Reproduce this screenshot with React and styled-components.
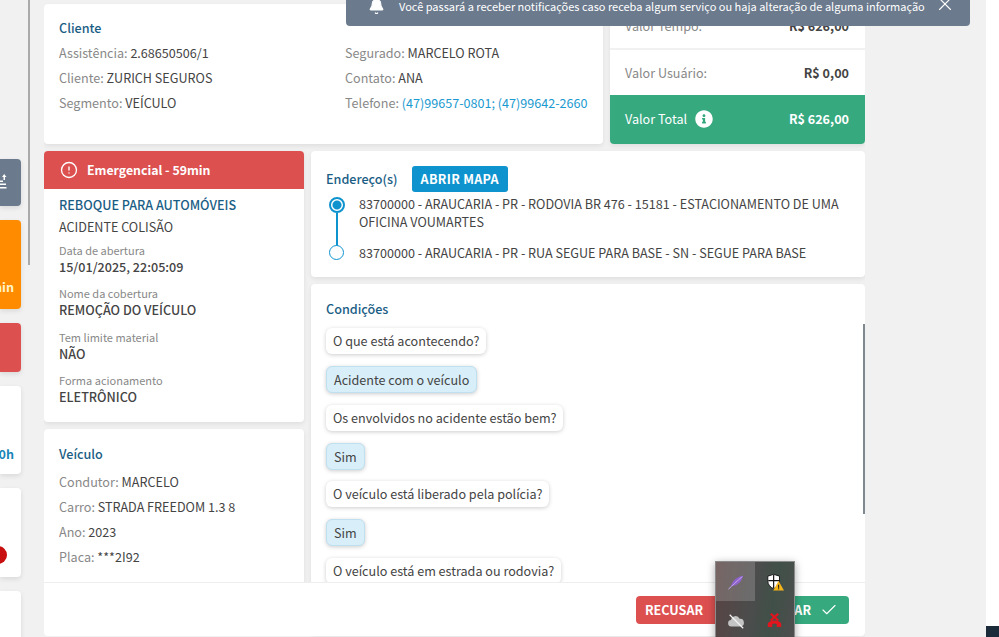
import React from "react";
import styled, { createGlobalStyle } from "styled-components";
import { Bell, Check, CircleAlert, X } from "lucide-react";
import { FaInfoCircle } from "react-icons/fa";

const GlobalStyle = createGlobalStyle`
  html, body {
    margin: 0;
    padding: 0;
    background: #f1f1f1;
  }
  *, *::before, *::after {
    box-sizing: border-box;
  }
`;

const clientLeft = [
  { label: "Assistência", value: "2.68650506/1" },
  { label: "Cliente", value: "ZURICH SEGUROS" },
  { label: "Segmento", value: "VEÍCULO" },
];

const clientRight = [
  { label: "Segurado", value: "MARCELO ROTA" },
  { label: "Contato", value: "ANA" },
  { label: "Telefone", value: "(47)99657-0801; (47)99642-2660", link: true },
];

const fields = [
  { label: "Data de abertura", value: "15/01/2025, 22:05:09" },
  { label: "Nome da cobertura", value: "REMOÇÃO DO VEÍCULO" },
  { label: "Tem limite material", value: "NÃO" },
  { label: "Forma acionamento", value: "ELETRÔNICO" },
];

const vehicle = [
  { label: "Condutor", value: "MARCELO" },
  { label: "Carro", value: "STRADA FREEDOM 1.3 8" },
  { label: "Ano", value: "2023" },
  { label: "Placa", value: "***2I92" },
];

const conditions = [
  { text: "O que está acontecendo?" },
  { text: "Acidente com o veículo", answer: true },
  { text: "Os envolvidos no acidente estão bem?" },
  { text: "Sim", answer: true },
  { text: "O veículo está liberado pela polícia?" },
  { text: "Sim", answer: true },
  { text: "O veículo está em estrada ou rodovia?" },
  { text: "Sim", answer: true },
];

const App = () => {
  return (
    <StPage>
      <GlobalStyle />
      <StSidebar>
        <StQueue>
          <StQueueCard $height={47} $bg="#6b7a8d" $bottom={17}>
            <svg width="7" height="15" viewBox="0 0 7 15" fill="#fff">
              <path d="M4.200 0 6.500 3H5v3H3.500V3H2z" />
              <rect x="0" y="6.500" width="3" height="1.500" />
              <rect x="0" y="9.500" width="6" height="1.500" />
              <rect x="0" y="13" width="6.500" height="1.500" />
            </svg>
          </StQueueCard>
          <StQueueCard $height={89} $bg="#ff8c00" $bottom={13}>
            <StQueueTime $color="#fff5cc">59min</StQueueTime>
          </StQueueCard>
          <StQueueCard $height={49} $bg="#dd5050" />
          <StQueueCard $height={88} $bg="#fff" $bottom={11}>
            <StQueueTime $color="#1b86b8">20h</StQueueTime>
          </StQueueCard>
          <StQueueCard $height={89} $bg="#fff" $bottom={13} $right={14}>
            <StQueueDot />
          </StQueueCard>
          <StQueueCard $height={60} $bg="#fff" />
        </StQueue>
        <StSideThumb />
      </StSidebar>

      <StMain>
        <StTopRow>
          <StClientCard>
            <StCardTitle>Cliente</StCardTitle>
            <StClientGrid>
              <div>
                {clientLeft.map((el) => (
                  <StInfoLine key={el.label}>
                    {el.label}: <StInfoValue>{el.value}</StInfoValue>
                  </StInfoLine>
                ))}
              </div>
              <div>
                {clientRight.map((el) => (
                  <StInfoLine key={el.label}>
                    {el.label}: <StInfoValue $link={el.link}>{el.value}</StInfoValue>
                  </StInfoLine>
                ))}
              </div>
            </StClientGrid>
          </StClientCard>

          <StValueCard>
            <StValueRow $height={46} $divider>
              <span>Valor Tempo:</span>
              <b>R$ 626,00</b>
            </StValueRow>
            <StValueRow $height={45}>
              <span>Valor Usuário:</span>
              <b>R$ 0,00</b>
            </StValueRow>
            <StTotalRow>
              <StTotalLabel>
                Valor Total <FaInfoCircle size={18} />
              </StTotalLabel>
              <b>R$ 626,00</b>
            </StTotalRow>
          </StValueCard>
        </StTopRow>

        <StBottomRow>
          <StLeftColumn>
            <StServiceCard>
              <StServiceHeader>
                <CircleAlert size={18} strokeWidth={1.8} />
                Emergencial - 59min
              </StServiceHeader>
              <StServiceBody>
                <StServiceName>REBOQUE PARA AUTOMÓVEIS</StServiceName>
                <StServiceReason>ACIDENTE COLISÃO</StServiceReason>
                {fields.map((el) => (
                  <StField key={el.label}>
                    <small>{el.label}</small>
                    <strong>{el.value}</strong>
                  </StField>
                ))}
              </StServiceBody>
            </StServiceCard>

            <StVehicleCard>
              <StCardTitle>Veículo</StCardTitle>
              <StVehicleList>
                {vehicle.map((el) => (
                  <StInfoLine key={el.label}>
                    {el.label}: <StInfoValue>{el.value}</StInfoValue>
                  </StInfoLine>
                ))}
              </StVehicleList>
            </StVehicleCard>
          </StLeftColumn>

          <StRightColumn>
            <StAddressCard>
              <StAddressHead>
                <StAddressTitle>Endereço(s)</StAddressTitle>
                <StMapButton>ABRIR MAPA</StMapButton>
              </StAddressHead>
              <StStops>
                <StStop>
                  <StStopMarker $active />
                  <StStopText>
                    83700000 - ARAUCARIA - PR - RODOVIA BR 476 - 15181 - ESTACIONAMENTO DE UMA
                    OFICINA VOUMARTES
                  </StStopText>
                </StStop>
                <StStop>
                  <StStopMarker />
                  <StStopText>
                    83700000 - ARAUCARIA - PR - RUA SEGUE PARA BASE - SN - SEGUE PARA BASE
                  </StStopText>
                </StStop>
              </StStops>
            </StAddressCard>

            <StConditionsCard>
              <StConditionsTitle>Condições</StConditionsTitle>
              <StBubbles>
                {conditions.map((el, i) => (
                  <StBubble key={`condition${i}`} $answer={el.answer}>
                    {el.text}
                  </StBubble>
                ))}
              </StBubbles>
              <StCardThumb />
            </StConditionsCard>
          </StRightColumn>
        </StBottomRow>

        <StFooter>
          <StActionButton $bg="#dd5050" $width={108}>
            RECUSAR
          </StActionButton>
          <StActionButton $bg="#36a97f">
            ACEITAR <Check size={18} strokeWidth={1.5} />
          </StActionButton>
        </StFooter>
      </StMain>

      <StBackdrop />
      <StEdge>
        <StEdgeCorner />
      </StEdge>

      <StToast>
        <Bell size={17} fill="#fff" strokeWidth={1.5} />
        <StToastText>
          Você passará a receber notificações caso receba algum serviço ou haja alteração de
          alguma informação
        </StToastText>
        <StToastClose>
          <X size={22} strokeWidth={1.2} />
        </StToastClose>
      </StToast>

      <StTray>
        <StTrayCell $hover>
          <svg width="18" height="18" viewBox="0 0 20 20">
            <path d="M2 17C5 16 5 10 9 7c3-2.500 6-3.500 9-4-1 3-2 6-5 8.500-3 2.500-6 3-9 3.500z" fill="#8f62cc" />
            <path d="M1.500 18C6 14 11 9 17 4" stroke="#c9aef0" strokeWidth="1" fill="none" />
          </svg>
        </StTrayCell>
        <StTrayCell>
          <svg width="18" height="18" viewBox="0 0 20 20">
            <path d="M8.500 1.500 15 3.500V9c0 4-3 7-6.500 8.500C5 16 2 13 2 9V3.500z" fill="#fff" stroke="#111" strokeWidth="1" />
            <path d="M8.500 2v15M2.500 8.500h12" stroke="#111" strokeWidth="1.300" />
            <path d="M14 9 20 19.500H8z" fill="#f4b41a" />
            <rect x="13.400" y="13" width="1.200" height="3.500" fill="#222" />
            <rect x="13.400" y="17" width="1.200" height="1.200" fill="#222" />
          </svg>
        </StTrayCell>
        <StTrayCell>
          <svg width="18" height="18" viewBox="0 0 20 20">
            <path d="M5 16a3.500 3.500 0 0 1-.5-7A5 5 0 0 1 14 7.500a4.200 4.200 0 0 1 1 8.500z" fill="#c4c4c4" />
            <path d="M3 3 18 18" stroke="#f2f2f2" strokeWidth="1.400" />
          </svg>
        </StTrayCell>
        <StTrayCell>
          <svg width="15" height="15" viewBox="0 0 20 20" fill="none">
            <path d="M5 1 15 10M15 1 5 10" stroke="#e0161e" strokeWidth="3" />
            <path d="M1 15c1-6.500 17-6.500 18 0v3.500h-6V15c-2-1.200-4-1.200-6 0v3.500H1z" fill="#e0161e" />
          </svg>
        </StTrayCell>
      </StTray>
    </StPage>
  );
};

export default App;

const StPage = styled.div`
  position: relative;
  display: flex;
  width: 999px;
  height: 637px;
  overflow: hidden;
  background: #f1f1f1;
  font-family: "Noto Sans CJK SC", "Source Sans Pro", "Open Sans", sans-serif;
  font-size: 12.6px;
  line-height: 18px;
  color: #444;
`;

const StSidebar = styled.div`
  display: flex;
  flex: 0 0 44px;
  gap: 7px;
  align-items: flex-start;
`;

const StQueue = styled.div`
  display: flex;
  flex-direction: column;
  flex: 0 0 21px;
  gap: 14px;
  padding-top: 159px;
`;

const StQueueCard = styled.div`
  display: flex;
  flex: 0 0 auto;
  justify-content: flex-end;
  align-items: flex-end;
  width: 21px;
  height: ${({ $height }) => $height}px;
  padding-right: ${({ $right }) => $right ?? 0}px;
  padding-bottom: ${({ $bottom }) => $bottom ?? 0}px;
  background: ${({ $bg }) => $bg};
  border-radius: 0 4px 4px 0;
  box-shadow: 0 2px 5px rgba(0, 0, 0, 0.1);
  overflow: hidden;

  & svg {
    flex: 0 0 auto;
    margin-right: 14px;
  }
`;

const StQueueTime = styled.span`
  padding-right: 7px;
  white-space: nowrap;
  font-weight: 700;
  color: ${({ $color }) => $color};
`;

const StQueueDot = styled.i`
  flex: 0 0 18px;
  height: 18px;
  border-radius: 50%;
  background: #c81010;
`;

const StSideThumb = styled.div`
  flex: 0 0 2px;
  height: 265px;
  background: #aaa;
`;

const StMain = styled.div`
  position: relative;
  flex: 0 0 821px;
  height: 637px;
  padding-top: 4px;
  overflow: hidden;
`;

const StTopRow = styled.div`
  display: grid;
  grid-template-columns: 559px 255px;
  gap: 7px;
  height: 140px;
  margin-bottom: 7px;
`;

const StCard = styled.div`
  background: #fff;
  border-radius: 4px;
  box-shadow: 0 2px 5px rgba(0, 0, 0, 0.08);
`;

const StClientCard = styled(StCard)`
  padding: 11px 15px;
`;

const StCardTitle = styled.div`
  height: 25px;
  line-height: 25px;
  font-weight: 500;
  color: #1a5e85;
`;

const StClientGrid = styled.div`
  display: grid;
  grid-template-columns: 286px 1fr;
`;

const StInfoLine = styled.div`
  height: 25px;
  line-height: 25px;
  color: #888;
  white-space: nowrap;
`;

const StInfoValue = styled.span`
  color: ${({ $link }) => ($link ? "#1a9ad0" : "#444")};
`;

const StValueCard = styled(StCard)`
  display: flex;
  flex-direction: column;
  overflow: hidden;
`;

const StValueRow = styled.div`
  display: flex;
  justify-content: space-between;
  align-items: center;
  height: ${({ $height }) => $height}px;
  padding: 0 16px 0 15px;
  color: #888;
  border-bottom: ${({ $divider }) => ($divider ? "2px solid #f1f1f1" : "none")};
  & b {
    font-weight: 700;
    color: #444;
  }
`;

const StTotalRow = styled.div`
  display: flex;
  flex: 1;
  justify-content: space-between;
  align-items: center;
  padding: 0 16px 1px 15px;
  background: #36a97f;
  color: #fff;
  & b {
    font-weight: 700;
  }
`;

const StTotalLabel = styled.span`
  display: flex;
  align-items: center;
  gap: 8px;
`;

const StBottomRow = styled.div`
  display: grid;
  grid-template-columns: 260px 554px;
  gap: 7px;
`;

const StLeftColumn = styled.div`
  display: flex;
  flex-direction: column;
  gap: 7px;
`;

const StRightColumn = styled.div`
  display: flex;
  flex-direction: column;
  gap: 7px;
`;

const StServiceCard = styled(StCard)`
  height: 271px;
  overflow: hidden;
`;

const StServiceHeader = styled.div`
  display: flex;
  align-items: center;
  gap: 9px;
  height: 38px;
  padding-left: 16px;
  background: #dd5050;
  color: #fff;
  font-size: 12.3px;
  font-weight: 700;
`;

const StServiceBody = styled.div`
  padding: 5px 15px 0;
`;

const StServiceName = styled.div`
  height: 22px;
  line-height: 22px;
  font-weight: 500;
  color: #1a5e85;
`;

const StServiceReason = styled.div`
  height: 22px;
  line-height: 22px;
  margin-bottom: 5px;
`;

const StField = styled.div`
  display: flex;
  flex-direction: column;
  height: 43.3px;
  & small {
    height: 16px;
    line-height: 15px;
    font-size: 11px;
    color: #888;
  }
  & strong {
    height: 16px;
    line-height: 16px;
    font-weight: 500;
    color: #444;
  }
`;

const StVehicleCard = styled(StCard)`
  height: 170px;
  padding: 12px 15px;
`;

const StVehicleList = styled.div`
  margin-top: 3px;
`;

const StAddressCard = styled(StCard)`
  height: 126px;
  padding: 15px 15px 0;
`;

const StAddressHead = styled.div`
  display: flex;
  align-items: center;
  gap: 14.5px;
`;

const StAddressTitle = styled.span`
  font-weight: 500;
  color: #1a5e85;
`;

const StMapButton = styled.button`
  height: 26px;
  padding: 0 8.5px;
  border: none;
  border-radius: 3px;
  background: #0f93cf;
  color: #fff;
  font: inherit;
  font-weight: 700;
  letter-spacing: 0.3px;
`;

const StStops = styled.div`
  display: flex;
  flex-direction: column;
  gap: 13px;
  margin-top: 3px;
`;

const StStop = styled.div`
  display: flex;
  gap: 11px;
  align-items: flex-start;
`;

const StStopMarker = styled.i`
  position: relative;
  flex: 0 0 22px;
  height: 18px;
  &::before {
    content: "";
    position: absolute;
    left: 3px;
    top: ${({ $active }) => ($active ? "2px" : "1px")};
    width: ${({ $active }) => ($active ? "16px" : "15px")};
    height: ${({ $active }) => ($active ? "16px" : "15px")};
    border-radius: 50%;
    border: ${({ $active }) => ($active ? "2px" : "1.8px")} solid #0f93cf;
    background: ${({ $active }) => ($active ? "radial-gradient(circle, #0f93cf 0 4px, #fff 5px)" : "#fff")};
  }
  &::after {
    content: "";
    display: ${({ $active }) => ($active ? "block" : "none")};
    position: absolute;
    left: 10px;
    top: 18px;
    width: 2px;
    height: 33px;
    background: #0f93cf;
  }
`;

const StStopText = styled.div`
  max-width: 490px;
`;

const StConditionsCard = styled(StCard)`
  position: relative;
  height: 350px;
  padding: 15px;
  overflow: hidden;
`;

const StConditionsTitle = styled.div`
  height: 20px;
  line-height: 20px;
  margin-bottom: 9px;
  font-weight: 500;
  color: #1a5e85;
`;

const StBubbles = styled.div`
  display: flex;
  flex-direction: column;
  align-items: flex-start;
  gap: 11.85px;
  padding: 0 4px 4px 0;
`;

const StBubble = styled.div`
  flex: 0 0 auto;
  height: ${({ $answer }) => ($answer ? "27px" : "26px")};
  line-height: ${({ $answer }) => ($answer ? "25px" : "26px")};
  padding: 0 7px;
  border-radius: 6px;
  border: ${({ $answer }) => ($answer ? "1px solid #bfe0ef" : "none")};
  background: ${({ $answer }) => ($answer ? "#d8eef8" : "#fff")};
  box-shadow: 0 1px 4px rgba(0, 0, 0, 0.2);
  white-space: nowrap;
`;

const StCardThumb = styled.div`
  position: absolute;
  top: 40px;
  right: 0;
  width: 2px;
  height: 190px;
  background: #808890;
`;

const StFooter = styled.div`
  position: absolute;
  left: 0;
  bottom: 1px;
  display: flex;
  justify-content: flex-end;
  align-items: center;
  gap: 6px;
  width: 821px;
  height: 54px;
  padding-right: 16px;
  background: #fff;
  border-top: 1px solid #eee;
  border-radius: 0 0 4px 4px;
`;

const StActionButton = styled.button`
  display: flex;
  align-items: center;
  gap: 9px;
  width: ${({ $width }) => ($width ? `${$width}px` : "auto")};
  height: 28px;
  padding: 0 11px 0 9px;
  border: none;
  border-radius: 4px;
  background: ${({ $bg }) => $bg};
  color: #fff;
  font: inherit;
  font-weight: 700;
`;

const StBackdrop = styled.div`
  flex: 1;
`;

const StEdge = styled.div`
  display: flex;
  flex: 0 0 13px;
  align-items: flex-end;
  background: #fff;
`;

const StEdgeCorner = styled.div`
  width: 13px;
  height: 11px;
  background: #1c2b3a;
`;

const StToast = styled.div`
  position: absolute;
  top: 0;
  left: 346px;
  display: flex;
  align-items: center;
  width: 624px;
  height: 26px;
  padding: 0 14px 14px 22px;
  background: #6b7a8d;
  border-radius: 0 0 4px 4px;
  color: #fff;

  & svg {
    flex: 0 0 auto;
  }
`;

const StToastText = styled.span`
  flex: 1;
  margin-left: 14px;
  font-size: 11px;
  white-space: nowrap;
`;

const StToastClose = styled.span`
  display: flex;
  flex: 0 0 22px;
  margin-top: -4px;
`;

const StTray = styled.div`
  position: absolute;
  left: 715px;
  top: 561px;
  display: grid;
  grid-template-columns: 39px 39px;
  grid-auto-rows: 39px;
  width: 80px;
  height: 80px;
  border: 1px solid #8a8a8a;
  background: linear-gradient(100deg, #5a4444 0%, #4c4c4c 45%, #405048 70%, #4e4e4e 100%);
  box-shadow: 0 2px 8px rgba(0, 0, 0, 0.35);
`;

const StTrayCell = styled.div`
  display: flex;
  justify-content: center;
  align-items: center;
  background: ${({ $hover }) => ($hover ? "rgba(255, 255, 255, 0.18)" : "transparent")};
`;
